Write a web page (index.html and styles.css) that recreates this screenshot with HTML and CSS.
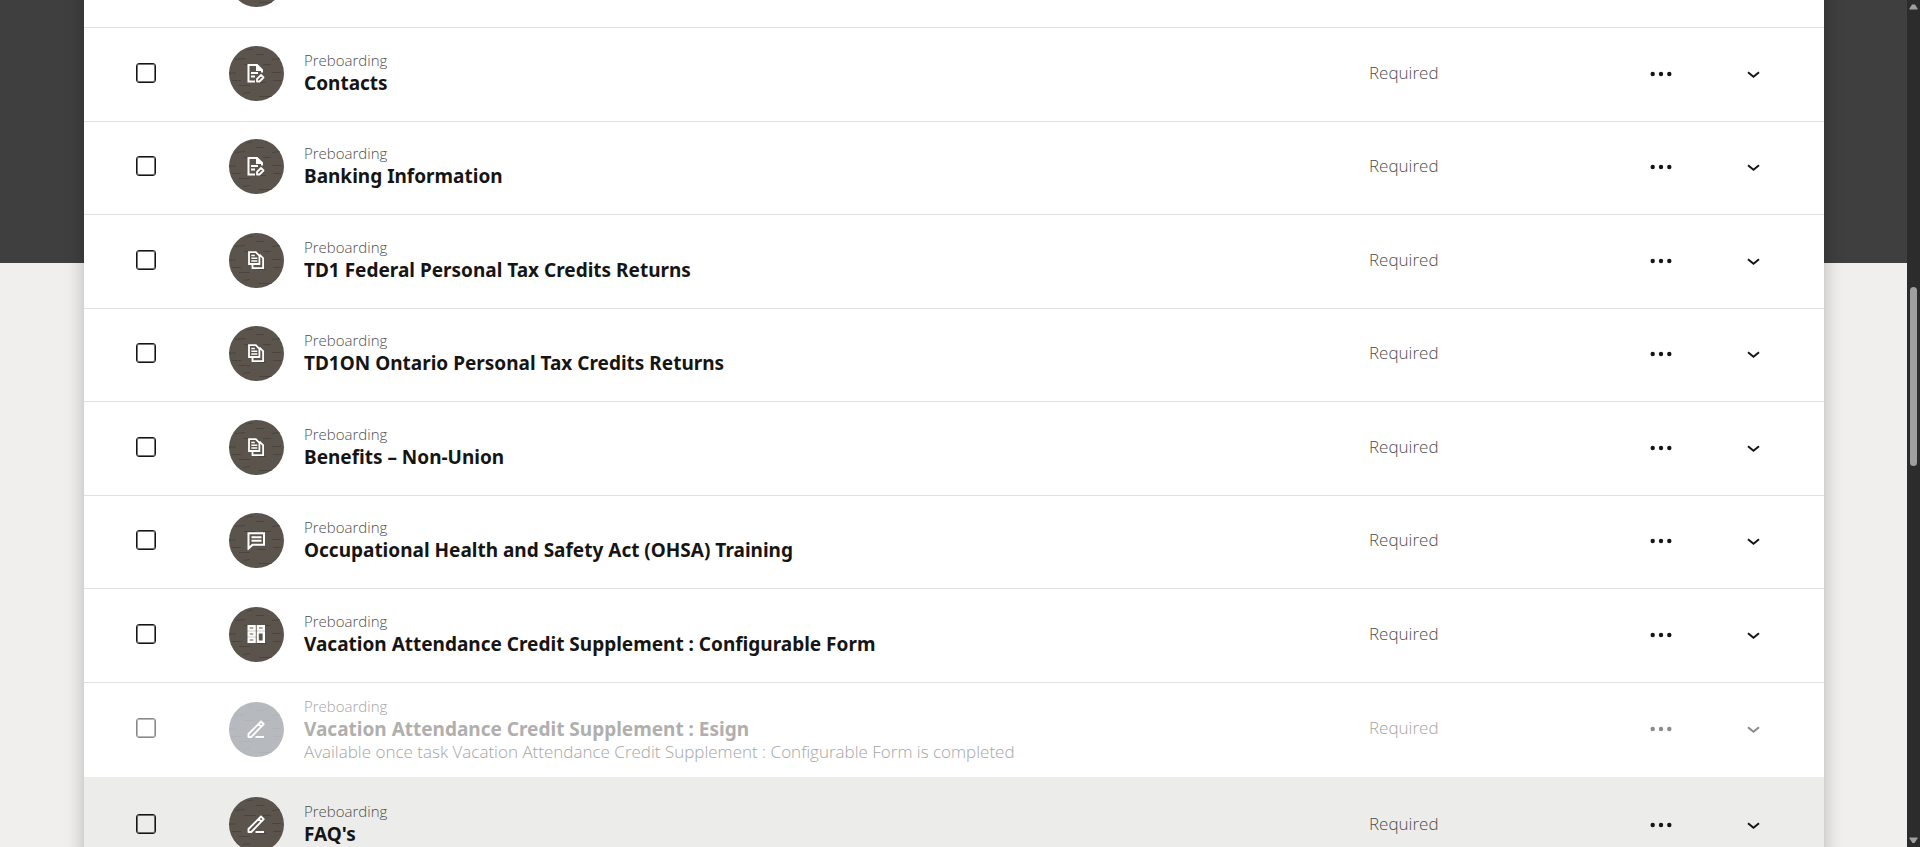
FILE: index.html
```
<!DOCTYPE html>
<html lang="en">
<head>
<meta charset="utf-8">
<title>Preboarding tasks</title>
<link rel="stylesheet" href="styles.css">
</head>
<body>
<svg class="sprite" aria-hidden="true">
  <symbol id="grain" viewBox="0 0 55 55">
    <path fill="none" stroke="currentColor" stroke-width="1" d="M18 4l6-1M27 8.500h8M6 13.500l10-1M43 13.500l9-1M15 18.500h12M34 18.500h8M0 27h7M43 26.500h9M3 34.500h9M44 34.500h8M10 39.500h11M28 36.500h9M14 47.500l7-1M30 50.500h14"/>
  </symbol>
  <symbol id="form-edit" viewBox="0 0 19 19">
    <path fill="none" stroke="currentColor" stroke-width="2" d="M8 17.500H1.500V1H10l5 5v2.500M4 9h7M4 12.500h4"/>
    <path fill="currentColor" d="M9 0l7 7H9z"/>
    <path fill="none" stroke="currentColor" stroke-width="1.800" stroke-linejoin="round" d="M10 17.500v-2.500l4-4 2.500 2.500-4 4z"/>
  </symbol>
  <symbol id="documents" viewBox="0 0 19 19">
    <path fill="none" stroke="currentColor" stroke-width="1.800" d="M2 1.200h6.800l3.600 3.600v8.200H2zM5.500 13.500v3.600h10.600V7.200L12.500 3.600"/>
    <path fill="none" stroke="currentColor" stroke-width="1.400" d="M4.300 4.500h3.500M4.300 7.200h6M4.300 10h6"/>
  </symbol>
  <symbol id="message" viewBox="0 0 19 19">
    <path fill="none" stroke="currentColor" stroke-width="2" d="M1.500 17.500V2.200h15.500v11.500H5.500zM4.500 6.200h10M4.500 9.800h10"/>
  </symbol>
  <symbol id="configurable" viewBox="0 0 19 19">
    <path fill="currentColor" fill-rule="evenodd" d="M0.500 0h8.300v18h-8.300zM2.700 2.400v1.200h3.600v-1.200zM2.700 8.400v1.200h3.600v-1.200zM2.700 14.400v1.200h3.600v-1.200zM9.700 0h8.300v18H9.700zM12 2.400v1.200h3.600v-1.200zM11.800 8.400v7.200h3.800V8.400z"/>
    <path fill="none" stroke="#5b544d" stroke-width="0.300" d="M0 6h19M0 12h9"/>
  </symbol>
  <symbol id="sign" viewBox="0 0 19 19">
    <path fill="none" stroke="currentColor" stroke-width="1.900" stroke-linejoin="round" d="M1.500 17v-3L14 1.500 16.700 4.200 4.300 17zM11.500 4l2.700 2.700"/>
    <path fill="none" stroke="currentColor" stroke-width="2" d="M8.500 17H17"/>
  </symbol>
  <symbol id="more" viewBox="0 0 24 24">
    <circle cx="3.700" cy="12" r="2.200"/><circle cx="12" cy="12" r="2.200"/><circle cx="20.300" cy="12" r="2.200"/>
  </symbol>
  <symbol id="chevron" viewBox="0 0 24 24">
    <path fill="none" stroke="currentColor" stroke-width="2" d="M6 10.200l5.500 4.500 5.500-4.500"/>
  </symbol>
</svg>

<div class="viewport">
  <main class="page">
    <ul class="tasks">
      <li class="task">
        <input class="check" type="checkbox" id="t0" aria-label="Task">
        <span class="avatar"><svg class="grain"><use href="#grain"/></svg></span>
      </li>
      <li class="task">
        <input class="check" type="checkbox" id="t1">
        <span class="avatar"><svg class="grain"><use href="#grain"/></svg><svg class="glyph"><use href="#form-edit"/></svg></span>
        <label class="text" for="t1"><span class="kind">Preboarding</span><span class="name">Contacts</span></label>
        <span class="status">Required</span>
        <button class="action" aria-label="Actions"><svg><use href="#more"/></svg></button>
        <button class="action" aria-label="Expand"><svg><use href="#chevron"/></svg></button>
      </li>
      <li class="task">
        <input class="check" type="checkbox" id="t2">
        <span class="avatar"><svg class="grain"><use href="#grain"/></svg><svg class="glyph"><use href="#form-edit"/></svg></span>
        <label class="text" for="t2"><span class="kind">Preboarding</span><span class="name">Banking Information</span></label>
        <span class="status">Required</span>
        <button class="action" aria-label="Actions"><svg><use href="#more"/></svg></button>
        <button class="action" aria-label="Expand"><svg><use href="#chevron"/></svg></button>
      </li>
      <li class="task">
        <input class="check" type="checkbox" id="t3">
        <span class="avatar"><svg class="grain"><use href="#grain"/></svg><svg class="glyph"><use href="#documents"/></svg></span>
        <label class="text" for="t3"><span class="kind">Preboarding</span><span class="name">TD1 Federal Personal Tax Credits Returns</span></label>
        <span class="status">Required</span>
        <button class="action" aria-label="Actions"><svg><use href="#more"/></svg></button>
        <button class="action" aria-label="Expand"><svg><use href="#chevron"/></svg></button>
      </li>
      <li class="task">
        <input class="check" type="checkbox" id="t4">
        <span class="avatar"><svg class="grain"><use href="#grain"/></svg><svg class="glyph"><use href="#documents"/></svg></span>
        <label class="text" for="t4"><span class="kind">Preboarding</span><span class="name">TD1ON Ontario Personal Tax Credits Returns</span></label>
        <span class="status">Required</span>
        <button class="action" aria-label="Actions"><svg><use href="#more"/></svg></button>
        <button class="action" aria-label="Expand"><svg><use href="#chevron"/></svg></button>
      </li>
      <li class="task">
        <input class="check" type="checkbox" id="t5">
        <span class="avatar"><svg class="grain"><use href="#grain"/></svg><svg class="glyph"><use href="#documents"/></svg></span>
        <label class="text" for="t5"><span class="kind">Preboarding</span><span class="name">Benefits – Non-Union</span></label>
        <span class="status">Required</span>
        <button class="action" aria-label="Actions"><svg><use href="#more"/></svg></button>
        <button class="action" aria-label="Expand"><svg><use href="#chevron"/></svg></button>
      </li>
      <li class="task">
        <input class="check" type="checkbox" id="t6">
        <span class="avatar"><svg class="grain"><use href="#grain"/></svg><svg class="glyph"><use href="#message"/></svg></span>
        <label class="text" for="t6"><span class="kind">Preboarding</span><span class="name">Occupational Health and Safety Act (OHSA) Training</span></label>
        <span class="status">Required</span>
        <button class="action" aria-label="Actions"><svg><use href="#more"/></svg></button>
        <button class="action" aria-label="Expand"><svg><use href="#chevron"/></svg></button>
      </li>
      <li class="task">
        <input class="check" type="checkbox" id="t7">
        <span class="avatar"><svg class="grain"><use href="#grain"/></svg><svg class="glyph"><use href="#configurable"/></svg></span>
        <label class="text" for="t7"><span class="kind">Preboarding</span><span class="name">Vacation Attendance Credit Supplement : Configurable Form</span></label>
        <span class="status">Required</span>
        <button class="action" aria-label="Actions"><svg><use href="#more"/></svg></button>
        <button class="action" aria-label="Expand"><svg><use href="#chevron"/></svg></button>
      </li>
      <li class="task task-locked">
        <input class="check" type="checkbox" id="t8" disabled>
        <span class="avatar"><svg class="grain"><use href="#grain"/></svg><svg class="glyph"><use href="#sign"/></svg></span>
        <label class="text" for="t8"><span class="kind">Preboarding</span><span class="name">Vacation Attendance Credit Supplement : Esign</span><span class="note">Available once task Vacation Attendance Credit Supplement : Configurable Form is completed</span></label>
        <span class="status">Required</span>
        <button class="action" aria-label="Actions"><svg><use href="#more"/></svg></button>
        <button class="action" aria-label="Expand"><svg><use href="#chevron"/></svg></button>
      </li>
      <li class="task task-active">
        <input class="check" type="checkbox" id="t9">
        <span class="avatar"><svg class="grain"><use href="#grain"/></svg><svg class="glyph"><use href="#sign"/></svg></span>
        <label class="text" for="t9"><span class="kind">Preboarding</span><span class="name">FAQ's</span></label>
        <span class="status">Required</span>
        <button class="action" aria-label="Actions"><svg><use href="#more"/></svg></button>
        <button class="action" aria-label="Expand"><svg><use href="#chevron"/></svg></button>
      </li>
    </ul>
  </main>
  <div class="scrollbar" aria-hidden="true">
    <svg class="arrow" viewBox="0 0 13 8"><path d="M2.500 7.500h8v-1L8 2.500H5L2.500 6.500z"/></svg>
    <div class="thumb"></div>
    <svg class="arrow" viewBox="0 0 13 8"><path d="M2.500 0.500h8v1L7.500 6h-2L2.500 1.500z"/></svg>
  </div>
</div>
</body>
</html>
```
FILE: styles.css
```
* { box-sizing: border-box; }

body {
  margin: 0;
  overflow: hidden;
  color: #161513;
  font-family: "Open Sans", "Noto Sans", sans-serif;
}

.sprite { display: none; }

.viewport {
  display: flex;
  height: 100vh;
}

.page {
  flex: 1;
  min-width: 0;
  overflow: hidden;
  padding: 0 83px 0 84px;
  background: linear-gradient(#3f3f3f 263px, #f0efed 263px);
}

.tasks {
  list-style: none;
  margin: -65px 0 0;
  padding: 0;
  background: #fff;
  box-shadow: 0 0 18px rgba(0, 0, 0, 0.24);
}

.task {
  display: grid;
  grid-template-columns: 20px 55px minmax(0, 1fr) 276px 32px 93px;
  align-items: center;
  padding: 18px 54px 20px 52px;
  border-bottom: 1px solid #e1e1e0;
}

.task:nth-child(odd) { padding-top: 17px; }

.check {
  appearance: none;
  width: 20px;
  height: 20px;
  margin: 0 0 2px;
  border: 1px solid #161513;
  box-shadow: inset 0 0 0 1px rgba(22, 21, 19, 0.6);
  border-radius: 3px;
}

.avatar {
  display: grid;
  place-items: center;
  width: 55px;
  height: 55px;
  margin-left: 73px;
  overflow: hidden;
  border-radius: 50%;
  background: #5b544d;
  color: #fff;
}

.grain,
.glyph { grid-area: 1 / 1; }

.grain {
  width: 55px;
  height: 55px;
  color: #4a443f;
}

.glyph {
  width: 19px;
  height: 19px;
}

.text {
  display: flex;
  flex-direction: column;
  margin-left: 93px;
  padding-bottom: 4px;
}

.kind,
.note,
.status {
  color: #4f4e4c;
  font-weight: 350;
}

.kind {
  font-size: 15px;
  line-height: 22px;
}

.name {
  font-family: "Noto Sans", "Open Sans", sans-serif;
  font-size: 19px;
  font-weight: 700;
  line-height: 24px;
}

.note {
  font-size: 17px;
  line-height: 22px;
}

.status {
  padding-bottom: 2px;
  font-size: 17px;
  line-height: 24px;
}

.action {
  display: grid;
  place-items: center;
  width: 32px;
  height: 32px;
  padding: 0;
  border: 0;
  background: none;
  color: #161513;
}

.action:last-child { justify-self: end; }

.action svg {
  width: 24px;
  height: 24px;
  fill: currentColor;
}

.task.task-locked {
  padding-top: 12px;
  padding-bottom: 14px;
  border-bottom: 0;
}

.task-locked .text { padding-bottom: 0; }

.task-locked .name { color: #b0afae; }

.task-locked .kind,
.task-locked .note,
.task-locked .status { color: #a6a5a4; }

.task-locked .check,
.task-locked .action { opacity: 0.5; }

.task-locked .avatar { background: #b6babf; }
.task-locked .grain { color: #b0b3b8; }

.task.task-active {
  padding-top: 20px;
  background: #ececea;
}

.scrollbar {
  display: flex;
  flex-direction: column;
  align-items: center;
  width: 13px;
  padding: 2px 0;
  background: #2c2c2c;
}

.arrow {
  width: 13px;
  height: 8px;
  fill: #9f9f9f;
}

.arrow:last-child { margin-top: auto; }

.thumb {
  width: 7px;
  height: 179px;
  margin-top: 277px;
  border-radius: 4px;
  background: #9f9f9f;
}
```
